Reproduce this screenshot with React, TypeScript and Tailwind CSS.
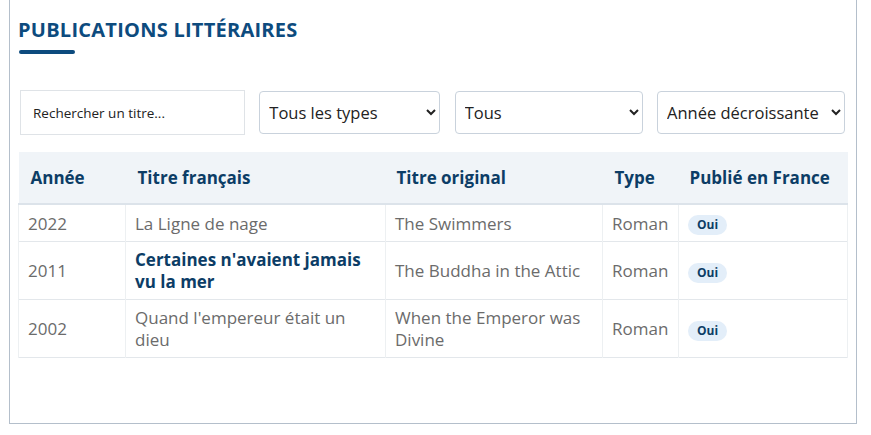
import { useState } from 'react'

type Publication = {
  year: number
  frTitle: string
  originalTitle: string
  type: string
  publishedInFrance: boolean
  highlighted?: boolean
}

const publications: Publication[] = [
  { year: 2022, frTitle: 'La Ligne de nage', originalTitle: 'The Swimmers', type: 'Roman', publishedInFrance: true },
  {
    year: 2011,
    frTitle: "Certaines n'avaient jamais vu la mer",
    originalTitle: 'The Buddha in the Attic',
    type: 'Roman',
    publishedInFrance: true,
    highlighted: true,
  },
  {
    year: 2002,
    frTitle: "Quand l'empereur était un dieu",
    originalTitle: 'When the Emperor was Divine',
    type: 'Roman',
    publishedInFrance: true,
  },
]

export default function App() {
  const [query, setQuery] = useState('')

  return (
    <div className="min-h-[435px] bg-white" style={{ fontFamily: '"Open Sans", "Noto Sans", sans-serif' }}>
      <section className="ml-[9px] w-[848px] border-x border-b border-[#b4bfcb] px-2 pt-[16px] pb-[65px]">
        {/* Heading */}
        <h2 className="text-[20px] leading-[28px] font-bold tracking-[0.25px] text-[#0d4b7e]">
          PUBLICATIONS LITTÉRAIRES
        </h2>
        <div className="mt-[6px] ml-[1px] h-1 w-14 rounded-full bg-[#0d4b7e]" />

        {/* Filters */}
        <div className="mt-9 ml-[2px] mr-[3px] flex items-center justify-between">
          <input
            value={query}
            onChange={(e) => setQuery(e.target.value)}
            placeholder="Rechercher un titre..."
            className="h-[45px] w-[225px] border border-[#dfe3e7] bg-white px-3 text-[13.5px] text-[#222] placeholder:text-[#222] outline-none"
          />
          <select className="h-[43px] w-[181px] rounded-[4px] border border-[#c9d2dc] bg-white pl-[5px] text-[16.5px] text-[#222]">
            <option>Tous les types</option>
          </select>
          <select className="h-[43px] w-[188px] rounded-[4px] border border-[#c9d2dc] bg-white pl-[5px] text-[16.5px] text-[#222]">
            <option>Tous</option>
          </select>
          <select className="h-[43px] w-[188px] rounded-[4px] border border-[#c9d2dc] bg-white pl-[5px] text-[16.5px] text-[#222]">
            <option>Année décroissante</option>
          </select>
        </div>

        {/* Table */}
        <table className="mt-[17px] w-[829px] table-fixed border-collapse text-[17px]">
          <colgroup>
            <col className="w-[107px]" />
            <col className="w-[260px]" />
            <col className="w-[217px]" />
            <col className="w-[76px]" />
            <col className="w-[169px]" />
          </colgroup>
          <thead>
            <tr className="border-b-2 border-[#dce3ea] bg-[#f0f4f8] text-left text-[#0c3d66]">
              <th className="pl-3 pr-2 pt-[14px] pb-[13px] leading-[24px] font-bold">Année</th>
              <th className="pl-3 pr-2 pt-[14px] pb-[13px] leading-[24px] font-bold">Titre français</th>
              <th className="pl-[11px] pr-2 pt-[14px] pb-[13px] leading-[24px] font-bold">Titre original</th>
              <th className="pl-3 pr-2 pt-[14px] pb-[13px] leading-[24px] font-bold">Type</th>
              <th className="pl-[11px] pr-2 pt-[14px] pb-[13px] leading-[24px] font-bold">Publié en France</th>
            </tr>
          </thead>
          <tbody>
            {publications.map((p) => (
              <tr key={p.year} className="border-b border-[#e3e7eb] text-[#6b6b6b]">
                <td className="border-x border-[#edf0f2] px-[9px] pt-[7px] pb-[6px] leading-[22px]">{p.year}</td>
                <td
                  className={`border-x border-[#edf0f2] px-[9px] pt-[7px] pb-[6px] leading-[22px] ${
                    p.highlighted ? 'font-bold text-[#0c3d66]' : ''
                  }`}
                >
                  {p.frTitle}
                </td>
                <td className="border-x border-[#edf0f2] px-[9px] pt-[7px] pb-[6px] leading-[22px]">{p.originalTitle}</td>
                <td className="border-x border-[#edf0f2] px-[9px] pt-[7px] pb-[6px] leading-[22px]">{p.type}</td>
                <td className="border-x border-[#edf0f2] px-[9px] pt-[7px] pb-[6px] leading-[22px]">
                  {p.publishedInFrance && (
                    <span className="inline-flex h-5 items-center rounded-full bg-[#e3eef9] px-[9px] text-[12px] font-bold text-[#0c3d66]">
                      Oui
                    </span>
                  )}
                </td>
              </tr>
            ))}
          </tbody>
        </table>
      </section>
    </div>
  )
}
